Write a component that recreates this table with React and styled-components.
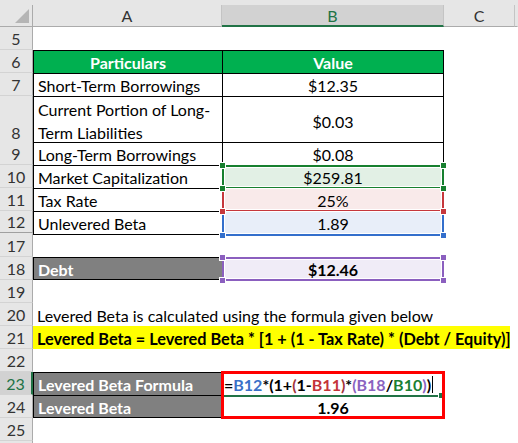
import React from 'react';
import styled, { createGlobalStyle, css } from 'styled-components';

const SEL = '#217346';
const COLS = '33px 189px 222px 71px 3px';
const FONT = 'Lato, "Liberation Sans", sans-serif';

const GlobalStyle = createGlobalStyle`
  html, body { margin: 0; padding: 0; background: #fff; }
  body { font-family: ${FONT}; }
`;

const Sheet = styled.div`
  width: 518px;
  height: 443px;
  overflow: hidden;
  background: #fff;
  display: flex;
  flex-direction: column;
  font-family: ${FONT};
  font-size: 16px;
  color: #000;
`;

const HeaderRow = styled.div`
  display: grid;
  grid-template-columns: ${COLS};
  height: 27px;
  padding-top: 5px;
  box-sizing: border-box;
  background: #e6e6e6;
  flex: none;
`;

const Corner = styled.div`
  position: relative;
  border-right: 1px solid #ababab;
  border-bottom: 1px solid #ababab;
  display: flex;
  align-items: flex-end;
  justify-content: flex-end;
  padding: 0 2px 2px 0;
`;

const ColHead = styled.div`
  display: flex;
  align-items: center;
  justify-content: center;
  box-sizing: border-box;
  border-right: 1px solid ${p => (p.$end ? 'transparent' : '#c4c4c4')};
  border-bottom: ${p => (p.$selected ? `2px solid ${SEL}` : '1px solid #ababab')};
  background: ${p => (p.$selected ? '#d2d2d2' : '#e6e6e6')};
  color: ${p => (p.$selected ? SEL : '#333')};
  font-size: 16px;
`;

const Row = styled.div`
  display: grid;
  grid-template-columns: ${COLS};
  height: ${p => p.$h || 23}px;
  flex: none;
`;

const RowNum = styled.div`
  display: flex;
  align-items: flex-end;
  justify-content: center;
  box-sizing: border-box;
  line-height: 21px;
  font-size: 16px;
  background: ${p => (p.$selected ? '#d2d2d2' : '#e6e6e6')};
  color: ${p => (p.$selected ? SEL : '#333')};
  border-right: ${p => (p.$selected ? `2px solid ${SEL}` : '1px solid #ababab')};
  border-bottom: ${p => (p.$gap ? '3px double #a0a0a0' : '1px solid #d3d3d3')};
`;

const line = '1px solid #000';

const Cell = styled.div`
  position: relative;
  box-sizing: border-box;
  display: flex;
  align-items: center;
  justify-content: ${p => (p.$center ? 'center' : 'flex-start')};
  padding: 1px ${p => (p.$pad ?? 4)}px 0;
  white-space: nowrap;
  font-weight: ${p => (p.$bold ? 700 : 400)};
  background: ${p => p.$bg || 'transparent'};
  color: ${p => p.$fg || '#000'};
  border-top: ${p => (p.$t ? line : 'none')};
  border-bottom: ${p => (p.$b ? line : 'none')};
  border-left: ${p => (p.$l ? line : 'none')};
  border-right: ${p => (p.$r ? line : 'none')};
  ${p => p.$span && css`grid-column: ${p.$span};`}
  ${p => p.$mr && css`margin-right: ${p.$mr}px;`}
  ${p => p.$size && css`font-size: ${p.$size}px;`}
`;

const WrapText = styled.div`
  line-height: 23px;
  white-space: normal;
`;

const RefBox = styled.span`
  position: absolute;
  top: 0;
  left: 0;
  right: 0;
  bottom: -1px;
  border: 2px solid ${p => p.$c};
  border-top-width: ${p => (p.$open ? 0 : 2)}px;
  box-shadow: inset 0 0 0 1px #fff;
  pointer-events: none;
  z-index: 1;
`;

const Handle = styled.span`
  position: absolute;
  width: 5px;
  height: 5px;
  background: ${p => p.$c};
  box-shadow: 0 0 0 1px #fff;
  z-index: 2;
  ${p => (p.$top ? 'top: -2px;' : 'bottom: -3px;')}
  ${p => (p.$left ? 'left: -2px;' : 'right: -2px;')}
`;

const Label = styled.span`
  position: relative;
  z-index: 3;
`;

const RedFrame = styled.span`
  position: absolute;
  top: -1px;
  left: -1px;
  width: 224px;
  height: 48px;
  box-sizing: border-box;
  border: 3px solid #ff0000;
  z-index: 4;
  pointer-events: none;
`;

const ActiveLine = styled.span`
  position: absolute;
  left: 2px;
  right: 4px;
  bottom: -2px;
  height: 2px;
  background: ${SEL};
  z-index: 3;
  &::after {
    content: '';
    position: absolute;
    right: -4px;
    top: -2px;
    width: 5px;
    height: 5px;
    background: ${SEL};
    box-shadow: 0 0 0 1px #fff;
  }
`;

const Tok = styled.span`
  color: ${p => p.$c || '#000'};
`;

const Caret = styled.span`
  display: inline-block;
  width: 1px;
  height: 17px;
  background: #000;
  margin-left: 1px;
`;

const REF = {
  green: { c: '#17802f', bg: '#e2f0e5' },
  red: { c: '#c6373c', bg: '#f9eaea' },
  blue: { c: '#336fcc', bg: '#e8eef9' },
  purple: { c: '#8b5fbf', bg: '#f0ecf7' },
};

function RefCell({ color, open, children, bold }) {
  const r = REF[color];
  return (
    <Cell $center $bg={r.bg} $bold={bold}>
      <RefBox $c={r.c} $open={open} />
      {!open && <Handle $c={r.c} $top $left />}
      {!open && <Handle $c={r.c} $top />}
      <Handle $c={r.c} $left />
      <Handle $c={r.c} />
      <Label>{children}</Label>
    </Cell>
  );
}

const C = { blue: '#3a70c8', red: '#c4343a', purple: '#8a63c0', green: '#1b7f34', maroon: '#a3343a' };

export default function App() {
  return (
    <>
      <GlobalStyle />
      <Sheet>
        <HeaderRow>
          <Corner>
            <svg width="16" height="16" viewBox="0 0 16 16">
              <polygon points="1,15 15,15 15,1" fill="#b5b5b5" />
            </svg>
          </Corner>
          <ColHead>A</ColHead>
          <ColHead $selected>B</ColHead>
          <ColHead>C</ColHead>
          <ColHead $end />
        </HeaderRow>

        <Row>
          <RowNum>5</RowNum>
          <Cell />
          <Cell />
        </Row>

        <Row>
          <RowNum>6</RowNum>
          <Cell $t $l $center $bold $bg="#00b050" $fg="#fff">Particulars</Cell>
          <Cell $t $l $r $center $bold $bg="#00b050" $fg="#fff">Value</Cell>
        </Row>

        <Row>
          <RowNum>7</RowNum>
          <Cell $t $l>Short-Term Borrowings</Cell>
          <Cell $t $l $r $center>$12.35</Cell>
        </Row>

        <Row $h={46}>
          <RowNum>8</RowNum>
          <Cell $t $l>
            <WrapText>
              Current Portion of Long-
              <br />
              Term Liabilities
            </WrapText>
          </Cell>
          <Cell $t $l $r $center>$0.03</Cell>
        </Row>

        <Row>
          <RowNum>9</RowNum>
          <Cell $t $l>Long-Term Borrowings</Cell>
          <Cell $t $l $r $center>$0.08</Cell>
        </Row>

        <Row>
          <RowNum>10</RowNum>
          <Cell $t $l>Market Capitalization</Cell>
          <RefCell color="green">$259.81</RefCell>
        </Row>

        <Row>
          <RowNum>11</RowNum>
          <Cell $t $l>Tax Rate</Cell>
          <RefCell color="red" open>25%</RefCell>
        </Row>

        <Row>
          <RowNum $gap>12</RowNum>
          <Cell $t $l $b>Unlevered Beta</Cell>
          <RefCell color="blue" open>1.89</RefCell>
        </Row>

        <Row>
          <RowNum>17</RowNum>
          <Cell />
          <Cell />
        </Row>

        <Row>
          <RowNum>18</RowNum>
          <Cell $t $l $b $bold $bg="#808080" $fg="#fff">Debt</Cell>
          <RefCell color="purple" bold>$12.46</RefCell>
        </Row>

        <Row>
          <RowNum>19</RowNum>
        </Row>

        <Row>
          <RowNum>20</RowNum>
          <Cell $span="2 / 6">Levered Beta is calculated using the formula given below</Cell>
        </Row>

        <Row>
          <RowNum>21</RowNum>
          <Cell $span="2 / 5" $mr={5} $bold $size={16.3} $bg="#ffff00">
            Levered Beta = Levered Beta * [1 + (1 - Tax Rate) * (Debt / Equity)]
          </Cell>
        </Row>

        <Row>
          <RowNum>22</RowNum>
        </Row>

        <Row>
          <RowNum $selected>23</RowNum>
          <Cell $t $l $bold $bg="#808080" $fg="#fff">Levered Beta Formula</Cell>
          <Cell $bold $pad={2}>
            <RedFrame />
            <ActiveLine />
            <Label>
              <Tok>=</Tok>
              <Tok $c={C.blue}>B12</Tok>
              <Tok>*(1+</Tok>
              <Tok $c={C.maroon}>(</Tok>
              <Tok>1-</Tok>
              <Tok $c={C.red}>B11</Tok>
              <Tok $c={C.maroon}>)</Tok>
              <Tok>*</Tok>
              <Tok $c={C.purple}>(B18</Tok>
              <Tok>/</Tok>
              <Tok $c={C.green}>B10</Tok>
              <Tok $c={C.purple}>)</Tok>
              <Tok>)</Tok>
            </Label>
            <Caret />
          </Cell>
        </Row>

        <Row>
          <RowNum>24</RowNum>
          <Cell $t $l $b $bold $bg="#808080" $fg="#fff">Levered Beta</Cell>
          <Cell $t $center $bold>1.96</Cell>
        </Row>

        <Row>
          <RowNum>25</RowNum>
        </Row>

        <Row>
          <RowNum />
        </Row>
      </Sheet>
    </>
  );
}
